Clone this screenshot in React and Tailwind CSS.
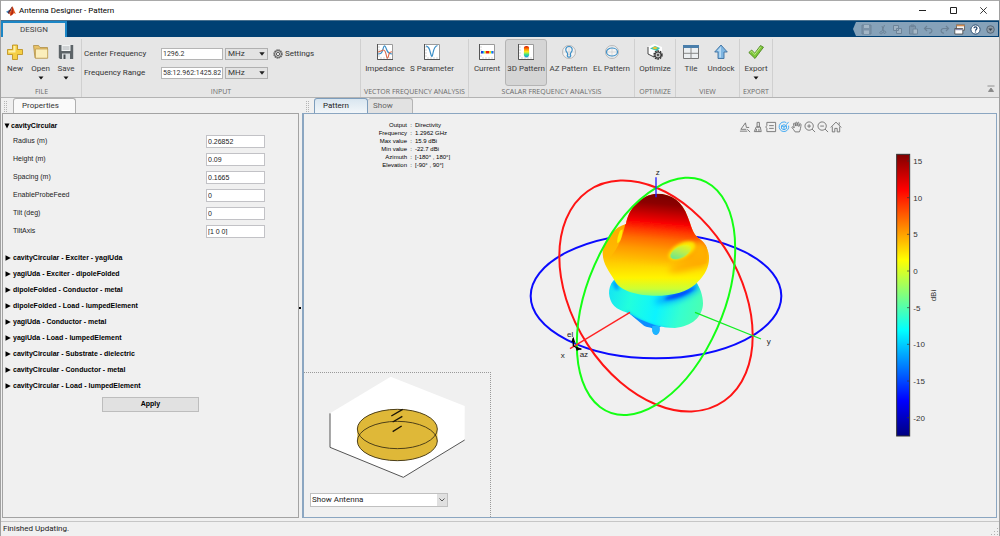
import React from "react";

const PROPERTIES = [
  { id: "radius", label: "Radius (m)", value: "0.26852" },
  { id: "height", label: "Height (m)", value: "0.09" },
  { id: "spacing", label: "Spacing (m)", value: "0.1665" },
  { id: "probe", label: "EnableProbeFeed", value: "0" },
  { id: "tilt", label: "Tilt (deg)", value: "0" },
  { id: "axis", label: "TiltAxis", value: "[1 0 0]" },
];

const SECTIONS = [
  "cavityCircular - Exciter - yagiUda",
  "yagiUda - Exciter - dipoleFolded",
  "dipoleFolded - Conductor - metal",
  "dipoleFolded - Load - lumpedElement",
  "yagiUda - Conductor - metal",
  "yagiUda - Load - lumpedElement",
  "cavityCircular - Substrate - dielectric",
  "cavityCircular - Conductor - metal",
  "cavityCircular - Load - lumpedElement",
];

const SUMMARY = [
  ["Output", "Directivity"],
  ["Frequency", "1.2962 GHz"],
  ["Max value", "15.9 dBi"],
  ["Min value", "-22.7 dBi"],
  ["Azimuth", "[-180° , 180°]"],
  ["Elevation", "[-90° , 90°]"],
];

/* ---------- ribbon icons ---------- */

const Icon = ({ children }) => (
  <svg viewBox="0 0 16 16" className="w-4 h-4 shrink-0" fill="none">
    {children}
  </svg>
);

const NewIcon = () => (
  <Icon>
    <path d="M5.500 1h5v4.500h5v5h-5v5h-5v-5h-5v-5h5z" fill="#f5cf45" stroke="#b98a17" strokeWidth="0.8" />
    <path d="M6.500 2h2v4.500h-2zM1.500 6.500h7v2h-7z" fill="#fdf0a8" />
  </Icon>
);

const OpenIcon = () => (
  <Icon>
    <path d="M.5 1.500h5l1.500 2h7.500v10.500H2z" fill="#e8c268" stroke="#a8853a" strokeWidth="0.7" />
    <path d="M2.500 5h12.200v9.200H2.500z" fill="#fbeebb" stroke="#b9964b" strokeWidth="0.7" />
  </Icon>
);

const SaveIcon = () => (
  <Icon>
    <path d="M.8 1h14.400v14H2L.8 13.800z" fill="#5d6468" />
    <path d="M3.500 1h9v6h-9z" fill="#f2f4f4" />
    <path d="M4.500 3h7M4.500 5h7" stroke="#9aa0a3" strokeWidth="0.8" />
    <path d="M4 9.500h8V15H4z" fill="#d9dddf" />
    <path d="M5.500 10.500h2V15h-2z" fill="#4b5154" />
  </Icon>
);

const Frame = () => (
  <>
    <path d="M.5.5h15v15H.5z" fill="#fff" stroke="#9b9b9b" />
    <path d="M.5 0v15.500H16" stroke="#555" />
    <path d="M1.500 3h1M1.500 6h1M1.500 9h1M1.500 12h1M4 14.500v-1M7 14.500v-1M10 14.500v-1M13 14.500v-1" stroke="#888" strokeWidth="0.7" />
  </>
);

const ImpedanceIcon = () => (
  <Icon>
    <Frame />
    <path d="M1 10c3 0 4-1 5-5s2-4 3-1 2 6 6 6" stroke="#3c8fc7" strokeWidth="1.100" />
    <path d="M1 8c3-.5 4-2 5.500-2S8.500 7 9.500 12s2 0 2.500-2 1-2 3-2.200" stroke="#d9694a" strokeWidth="1.100" />
  </Icon>
);

const SParamIcon = () => (
  <Icon>
    <Frame />
    <path d="M2 2c3 .5 3.500 3 4.500 7s1.500 5 2.500 0 2-7 4.500-7.500" stroke="#3c8fc7" strokeWidth="1.200" />
  </Icon>
);

const CurrentIcon = () => (
  <Icon>
    <Frame />
    <path d="M2 7h2v2.500H2z" fill="#1b3fe0" />
    <path d="M4 7h1.500v2.500H4zM12 7h1.500v2.500H12z" fill="#19c6e6" />
    <path d="M5.500 7H7v2.500H5.500z" fill="#f6d21b" />
    <path d="M7 7h3v2.500H7z" fill="#e3200f" />
    <path d="M10 7h2v2.500h-2z" fill="#f6d21b" />
    <path d="M13.200 7h1.300v2.500h-1.300z" fill="#1b3fe0" />
  </Icon>
);

const Pattern3DIcon = () => (
  <Icon>
    <defs>
      <linearGradient id="mini3d" x1="0" y1="0" x2="0" y2="1">
        <stop offset="0" stopColor="#d30f00" />
        <stop offset="0.25" stopColor="#ff7b00" />
        <stop offset="0.5" stopColor="#f8ee1b" />
        <stop offset="0.75" stopColor="#35e08c" />
        <stop offset="1" stopColor="#1c8ef0" />
      </linearGradient>
    </defs>
    <Frame />
    <path d="M8.500 2c2 0 3 1.200 2.500 3.200-.3 1 .3 1.500.1 3-.1 1.300.2 2-.1 3.300-.4 1.300-1.300 2-2.500 2s-2.200-.7-2.500-2c-.3-1.300 0-2-.1-3.300-.1-1.500.4-2 .1-3C5.500 3.200 6.500 2 8.500 2z" fill="url(#mini3d)" />
  </Icon>
);

const AzIcon = () => (
  <Icon>
    <circle cx="8" cy="8" r="6.500" fill="#f4f4f4" stroke="#a8a8a8" strokeWidth="0.8" />
    <path d="M8 1v14M1 8h14" stroke="#c9c9c9" strokeWidth="0.6" />
    <path d="M8 2.500c2.200 0 3.400 1.600 3.200 3.500C11 8 9.300 8.500 9.300 10.500c1 1.200.2 2.700-1.300 2.700s-2.300-1.500-1.300-2.700C6.700 8.500 5 8 4.800 6 4.600 4.100 5.800 2.500 8 2.500z" stroke="#3c8fc7" strokeWidth="1.200" />
  </Icon>
);

const ElIcon = () => (
  <Icon>
    <circle cx="8" cy="8" r="6.500" fill="#f4f4f4" stroke="#a8a8a8" strokeWidth="0.8" />
    <path d="M8 1v14M1 8h14" stroke="#c9c9c9" strokeWidth="0.6" />
    <ellipse cx="8" cy="8" rx="5.500" ry="4" stroke="#3c8fc7" strokeWidth="1.200" />
  </Icon>
);

const OptimizeIcon = () => (
  <Icon>
    <path d="M1 3l6-3 8 3v7l-6 3-8-3z" fill="#fff" />
    <path d="M1 3v7l6 3" stroke="#333" strokeWidth="0.9" />
    <path d="M3 4.500L8 2l5 2-3 3z" fill="#31c4b4" />
    <path d="M5 4l3-1.500L11 4 8 5.500z" fill="#f2c332" />
    <circle cx="11" cy="11" r="3.800" stroke="#333" strokeWidth="1.800" strokeDasharray="1.700 .7" />
    <circle cx="11" cy="11" r="3" fill="#bbb" stroke="#444" />
    <circle cx="11" cy="11" r="1" fill="#333" />
  </Icon>
);

const TileIcon = () => (
  <Icon>
    <path d="M.5 1.500h15v13H.5z" fill="#eceff1" stroke="#777" />
    <path d="M0 1h16v3H0z" fill="#4a7eab" />
    <path d="M8 4v10.500M1 9.300h14" stroke="#888" />
  </Icon>
);

const UndockIcon = () => (
  <Icon>
    <path d="M8 1l6.300 7H11v6.500H5V8H1.700z" fill="#7fb6e2" stroke="#3c6f9f" strokeWidth="0.9" />
    <path d="M8 2.500L4 7h2.300v6.500H8z" fill="#b8daf3" />
  </Icon>
);

const ExportIcon = () => (
  <Icon>
    <path d="M.8 8.500L3.700 6l3 3.300L12.500 1.500l3 1.700L7 14.500z" fill="#7cc63a" stroke="#477f1c" strokeWidth="0.8" />
    <path d="M2.200 8.400L3.700 7.200l3 3.300 6-7.700" stroke="#c5ee8f" strokeWidth="0.9" />
  </Icon>
);

const GearIcon = () => (
  <svg viewBox="0 0 12 12" className="w-[10px] h-[10px]" fill="none">
    <circle cx="6" cy="6" r="4.800" stroke="#555" strokeWidth="1.600" strokeDasharray="1.700 .8" />
    <circle cx="6" cy="6" r="4" stroke="#555" strokeWidth="1" />
    <circle cx="6" cy="6" r="2" stroke="#555" strokeWidth="1.100" />
  </svg>
);

const Caret = () => (
  <svg viewBox="0 0 6 4" className="w-[6px] h-1">
    <path d="M.5.5h5L3 3.500z" fill="#111" />
  </svg>
);

/* ---------- ribbon ---------- */

const Group = ({ title, className, children }) => (
  <section className={`flex flex-col shrink-0 border-r border-[#d0d0d0] ${className}`}>
    <div className="flex flex-1">{children}</div>
    <h2 className="font-['Open_Sans',sans-serif] text-[7px] leading-[10px] text-center text-[#6a6a6a] whitespace-nowrap">
      {title}
    </h2>
  </section>
);

const Tool = ({ icon, label, menu, active, className }) => (
  <button
    type="button"
    className={`flex flex-col items-center h-[47px] pt-1 border rounded-[3px] text-[8px] leading-[10px] text-[#3c3c3c] whitespace-nowrap ${
      active ? "bg-[#d5d5d5] border-[#b4b4b4]" : "border-transparent"
    } ${className}`}
  >
    {icon}
    <span className="mt-1 flex justify-center w-0">{label}</span>
    {menu && (
      <span className="mt-[2px]">
        <Caret />
      </span>
    )}
  </button>
);

const FrequencyRow = ({ id, label, value, align }) => (
  <div className="flex items-center h-3">
    <label htmlFor={id} className="w-[77px] text-[8px] text-[#333] whitespace-nowrap">
      {label}
    </label>
    <input
      id={id}
      defaultValue={value}
      className={`w-[62px] h-3 px-px bg-white border border-[#b5b5b5] text-[7px] text-[#333] ${align}`}
    />
    <span className="relative ml-[2px]">
      <select
        aria-label={`${label} unit`}
        className="block appearance-none w-[43px] h-3 pl-[2px] border border-[#b0b0b0] bg-[#e3e3e3] text-[8px] leading-[10px] text-[#333]"
      >
        <option>MHz</option>
      </select>
      <span className="absolute right-[3px] top-1 pointer-events-none">
        <svg viewBox="0 0 6 4" className="block w-[6px] h-1">
          <path d="M.3.3h5.400L3 3.700z" fill="#222" />
        </svg>
      </span>
    </span>
  </div>
);

const Ribbon = () => (
  <div className="flex items-stretch h-[61px] pt-[2px] bg-[#e6e6e6] border-b border-[#b3b3b3]">
    <Group title="FILE" className="w-[81px] pl-px">
      <Tool icon={<NewIcon />} label="New" className="w-[26px]" />
      <Tool icon={<OpenIcon />} label="Open" menu className="w-[25px]" />
      <Tool icon={<SaveIcon />} label="Save" menu className="w-[26px]" />
    </Group>
    <Group title="INPUT" className="w-[279px]">
      <div className="flex flex-1 pl-[2px] pt-[9px]">
        <div className="flex flex-col gap-[7px]">
          <FrequencyRow id="center" label="Center Frequency" value="1296.2" align="text-left" />
          <FrequencyRow id="range" label="Frequency Range" value="58:12.962:1425.82" align="text-right" />
        </div>
        <button type="button" className="flex items-center gap-[2px] h-3 ml-[5px] text-[8px] text-[#333]">
          <GearIcon />
          Settings
        </button>
      </div>
    </Group>
    <Group title="VECTOR FREQUENCY ANALYSIS" className="w-[108px]">
      <Tool icon={<ImpedanceIcon />} label="Impedance" className="w-[48px]" />
      <Tool icon={<SParamIcon />} label="S Parameter" className="w-[46px]" />
    </Group>
    <Group title="SCALAR FREQUENCY ANALYSIS" className="w-[166px]">
      <Tool icon={<CurrentIcon />} label="Current" className="w-[36px]" />
      <Tool icon={<Pattern3DIcon />} label="3D Pattern" active className="w-[42px]" />
      <Tool icon={<AzIcon />} label="AZ Pattern" className="w-[43px]" />
      <Tool icon={<ElIcon />} label="EL Pattern" className="w-[43px]" />
    </Group>
    <Group title="OPTIMIZE" className="w-[41px]">
      <Tool icon={<OptimizeIcon />} label="Optimize" className="w-[40px]" />
    </Group>
    <Group title="VIEW" className="w-[64px]">
      <Tool icon={<TileIcon />} label="Tile" className="w-[30px]" />
      <Tool icon={<UndockIcon />} label="Undock" className="w-[30px]" />
    </Group>
    <Group title="EXPORT" className="w-[33px]">
      <Tool icon={<ExportIcon />} label="Export" menu className="w-[32px]" />
    </Group>
    <button type="button" aria-label="Minimize ribbon" className="ml-auto mr-[4px] self-end mb-1">
      <svg viewBox="0 0 8 8" className="block w-2 h-2">
        <path d="M.5 1h7M1.500 6.500h5L4 3z" fill="#888" stroke="#888" strokeWidth="0.9" />
      </svg>
    </button>
  </div>
);

/* ---------- window chrome ---------- */

const TitleBar = () => (
  <header className="flex items-center h-5 pl-[5px] bg-white border-t border-[#a9a9a9] text-[8px] text-black">
    <svg viewBox="0 0 30 28" className="w-[10px] h-[10px] mr-[3px]">
      <path d="M0 16l10-5 4 4-6 7z" fill="#3f8fc5" />
      <path d="M10 11c4-2 6-9 9-11-1 8-5 16-11 22l-3-3z" fill="#5a2434" />
      <path d="M19 0c4 4 6 16 11 23-4-3-7-2-9 0-3 3-5 5-8 5 0-4-2-6-5-6 6-5 9-13 11-22z" fill="#e2571c" />
      <path d="M19 1c3 5 3 14 2 22-3 2-5 5-8 5 2-7 5-15 6-27z" fill="#b32a12" />
    </svg>
    <h1 className="flex-1">Antenna Designer - Pattern</h1>
    <div className="flex">
      <button type="button" aria-label="Minimize" className="w-[31px] flex justify-center">
        <svg viewBox="0 0 7 7" className="w-[7px] h-[7px]" stroke="#222" fill="none">
          <path d="M0 3.500h7" />
        </svg>
      </button>
      <button type="button" aria-label="Maximize" className="w-[30px] flex justify-center">
        <svg viewBox="0 0 7 7" className="w-[7px] h-[7px]" stroke="#222" fill="none">
          <path d="M.5.5h6v6h-6z" />
        </svg>
      </button>
      <button type="button" aria-label="Close" className="w-[31px] flex justify-center">
        <svg viewBox="0 0 7 7" className="w-[7px] h-[7px]" stroke="#222" strokeWidth="0.9" fill="none">
          <path d="M.3.3l6.400 6.400M6.700.3L.3 6.700" />
        </svg>
      </button>
    </div>
  </header>
);

const QUICK_ACTIONS = [
  {
    name: "Save",
    art: (
      <>
        <path d="M1 1h9v9H1z" stroke="#6d8499" fill="#7c93a8" />
        <path d="M3 1h5v3H3zM3 6.500h5V10H3z" fill="#a3b6c6" />
      </>
    ),
  },
  {
    name: "Cut",
    art: <path d="M7.500 1L5 7M5 2l1.500 5M4 7.500a1.200 1.200 0 1 0 .1 0M7.500 7a1.200 1.200 0 1 0 .1 0" stroke="#6b8296" />,
  },
  {
    name: "Copy",
    art: <path d="M1.500 1.500h5v5h-5zM4.500 4.500h5v5h-5z" stroke="#6d8499" fill="#9fb2c2" />,
  },
  {
    name: "Paste",
    art: (
      <>
        <path d="M1.500 2h6v8h-6zM3 1h3v1.500H3z" stroke="#6d8499" fill="#8198ac" />
        <path d="M5 5h4.500v5H5z" stroke="#71889c" fill="#a6b8c7" />
      </>
    ),
  },
  { name: "Undo", art: <path d="M4 2L1.500 4.500 4 7M2 4.500h4.500c3.500 0 3 5-.5 4.500" stroke="#6b8296" strokeWidth="1.200" /> },
  { name: "Redo", art: <path d="M7 2l2.500 2.500L7 7M9 4.500H4.500C1 4.500 1.500 9.500 5 9" stroke="#6b8296" strokeWidth="1.200" /> },
  {
    name: "Switch windows",
    art: (
      <>
        <path d="M2.500.8h8v5.500h-8z" fill="#f6f6f6" stroke="#555" strokeWidth="0.8" />
        <path d="M2.500.8h8v1.500h-8z" fill="#d28a4c" />
        <path d="M.8 4.500h8V10h-8z" fill="#fff" stroke="#444" strokeWidth="0.8" />
        <path d="M1 5h7.500v1.200H1z" fill="#88a" />
      </>
    ),
  },
  {
    name: "Help",
    art: (
      <>
        <circle cx="5.500" cy="5.500" r="4.600" fill="#fff" stroke="#2d4f73" />
        <path d="M4 4.300c0-2 3-2 3 0 0 1.200-1.500 1.200-1.500 2.400M5.500 7.500v1" stroke="#1d4168" strokeWidth="1.200" />
      </>
    ),
  },
  {
    name: "More",
    art: (
      <>
        <circle cx="5.500" cy="5.500" r="3.800" fill="#8c9aa6" stroke="#4f6172" strokeWidth="0.9" />
        <path d="M3.500 4.500h4l-2 2.500z" fill="#33414d" />
      </>
    ),
  },
];

const TabBar = () => (
  <nav className="flex items-stretch justify-between h-[17px] pr-px bg-[#004073] border-t border-[#48708f]">
    <button
      type="button"
      className="w-[66px] bg-[#e6e6e6] border-2 border-b-0 border-[#1b86c6] text-[8px] leading-[14px] text-[#444]"
    >
      DESIGN
    </button>
    <div className="flex items-center">
      <svg viewBox="0 0 5 14" className="w-[5px] h-[14px]">
        <path d="M5 0H3L0 7l3 7h2z" fill="#86a2b9" />
      </svg>
      <div className="flex items-center justify-between w-[140px] h-[14px] pl-[3px] pr-px bg-[#86a2b9]">
        {QUICK_ACTIONS.map((action) => (
          <button key={action.name} type="button" aria-label={action.name} className="w-3">
            <svg viewBox="0 0 11 11" className="block w-[11px] h-[11px]" fill="none">
              {action.art}
            </svg>
          </button>
        ))}
      </div>
    </div>
  </nav>
);

const Grip = () => (
  <span className="w-[3px] h-[11px] mt-[3px] border-x border-dotted border-[#b5b5b5]" />
);

/* ---------- properties ---------- */

const PropertiesPanel = () => (
  <aside className="flex flex-col w-[298px] shrink-0 pl-px">
    <div className="flex h-[15px] pl-[2px] gap-[6px]">
      <Grip />
      <h2 className="w-[63px] bg-[#fafafa] border border-b-0 border-[#b0b0b0] rounded-t-[3px] pl-2 text-[8px] leading-[14px] text-[#333]">
        Properties
      </h2>
    </div>
    <div className="flex-1 border border-[#a3a3a3] bg-[#f0f0f0] font-['Liberation_Sans',Arial,sans-serif] text-[7px] text-[#222]">
      <button type="button" className="flex items-center gap-px h-3 mt-[6px] pl-px font-bold text-black">
        <svg viewBox="0 0 6 6" className="w-[6px] h-[6px]">
          <path d="M.5.5h5L3 5.500z" />
        </svg>
        cavityCircular
      </button>
      <div className="flex flex-col mt-[3px] gap-[5px]">
        {PROPERTIES.map((prop) => (
          <div key={prop.id} className="flex items-start h-[13px] pl-[10px] pr-[33px]">
            <label htmlFor={prop.id} className="flex-1 leading-[11px]">
              {prop.label}
            </label>
            <input
              id={prop.id}
              defaultValue={prop.value}
              className="w-[59px] h-[13px] px-px bg-white border border-[#c2c2c6]"
            />
          </div>
        ))}
      </div>
      <ul className="mt-3">
        {SECTIONS.map((name) => (
          <li key={name}>
            <button type="button" className="flex items-center gap-[2px] h-4 pl-[2px] font-bold text-black">
              <svg viewBox="0 0 6 6" className="w-[6px] h-[6px]">
                <path d="M.5.3v5.400L5.800 3z" />
              </svg>
              {name}
            </button>
          </li>
        ))}
      </ul>
      <button
        type="button"
        className="block w-[97px] h-[15px] mt-[3px] ml-[99px] bg-[#e1e1e1] border border-[#bdbdbd] font-bold text-black"
      >
        Apply
      </button>
    </div>
  </aside>
);

/* ---------- plot area ---------- */

const AXES_TOOLS = [
  { name: "Export", art: <path d="M1 11h8M2 9l5-7 1 5h3M9 9l3 3M2 9h6" /> },
  { name: "Brush", art: <path d="M5.500 1.500h2.500v5H5.500zM4.500 6.500h4.500l1 5H2.500zM5 8.500l-.7 3M7.500 8.500v3" /> },
  { name: "Data tips", art: <path d="M2 1.500h9.500v10H2V8L.8 6.500 2 5zM4.500 5h5M4.500 8h5" /> },
  {
    name: "Rotate",
    active: true,
    art: <path d="M9 1.700A5.200 5.200 0 1 0 11.500 5M9 4l2.500-3M3.800 5.200l2.700-1.200 2.700 1.200v3L6.500 9.500 3.800 8.200zM3.800 5.200l2.700 1.200 2.700-1.200M6.500 6.400v3" />,
  },
  {
    name: "Pan",
    art: <path d="M4.500 11.800C3.500 10 2 8.500 1 7c0-1.200 1.300-1 2.500.5L2.700 3c.2-1 1.200-1 1.500 0L5 5.500V2c.2-1 1.300-1 1.500 0v3.500L7.300 2c.4-1 1.400-.7 1.400.3L8.500 6l1-2.500c.5-.8 1.500-.4 1.400.5-.3 2.500-.6 5.500-1.900 7.800z" />,
  },
  { name: "Zoom in", art: <path d="M5.500 1a4.500 4.500 0 1 0 .1 0zM8.700 8.700L12 12M3.500 5.500h4M5.500 3.500v4" /> },
  { name: "Zoom out", art: <path d="M5.500 1a4.500 4.500 0 1 0 .1 0zM8.700 8.700L12 12M3.500 5.500h4" /> },
  { name: "Restore view", art: <path d="M.8 7L6.500 1.200 12.200 7M2.500 6v5.800h2.700V8h2.600v3.800h2.700V6M10 4V1.500" /> },
];

const AxesToolbar = () => (
  <div className="flex justify-end pt-[7px] pr-[153px]">
    {AXES_TOOLS.map((tool) => (
      <button key={tool.name} type="button" aria-label={tool.name} className="w-[13px]">
        <svg
          viewBox="0 0 13 13"
          className="block w-3 h-3"
          fill="none"
          stroke={tool.active ? "#3aa6f2" : "#747474"}
          strokeWidth="1"
        >
          {tool.art}
        </svg>
      </button>
    ))}
  </div>
);

const UPPER_LOBE =
  "M318 192 C285 200 255 235 248 275 C247 310 266 332 283 360 C300 398 370 410 425 407 C480 404 515 386 533 366 C556 344 567 320 567 295 C566 262 552 246 535 235 C515 215 514 196 503 170 C487 124 455 101 411 101 C362 104 325 146 318 192Z";
const LOWER_LOBE =
  "M287 355 C264 375 262 405 276 430 C292 455 325 455 345 470 C385 490 425 504 465 504 C515 500 549 470 549 430 C549 405 540 385 530 368Z";

const RadiationPattern = () => (
  <svg viewBox="0 0 810 810" className="block w-[270px] h-[270px]" fill="none">
    <defs>
      <linearGradient id="torus" x1="0" y1="190" x2="0" y2="408" gradientUnits="userSpaceOnUse">
        <stop offset="0" stopColor="#ffa800" />
        <stop offset="0.45" stopColor="#ffbc00" />
        <stop offset="0.6" stopColor="#ffd800" />
        <stop offset="0.75" stopColor="#fff400" />
        <stop offset="0.9" stopColor="#ccff34" />
        <stop offset="1" stopColor="#80ff80" />
      </linearGradient>
      <linearGradient id="mainlobe" x1="418" y1="100" x2="398" y2="320" gradientUnits="userSpaceOnUse">
        <stop offset="0" stopColor="#780000" />
        <stop offset="0.14" stopColor="#8c0000" />
        <stop offset="0.28" stopColor="#c80000" />
        <stop offset="0.4" stopColor="#fa0400" />
        <stop offset="0.5" stopColor="#ff3600" />
        <stop offset="0.62" stopColor="#ff6c00" />
        <stop offset="0.76" stopColor="#ff9800" />
        <stop offset="0.9" stopColor="#ffb800" />
        <stop offset="1" stopColor="#ffc800" stopOpacity="0" />
      </linearGradient>
      <linearGradient id="backlobe" x1="268" y1="380" x2="540" y2="450" gradientUnits="userSpaceOnUse">
        <stop offset="0" stopColor="#14e4f4" />
        <stop offset="0.25" stopColor="#22ffdc" />
        <stop offset="0.55" stopColor="#0cf4ff" />
        <stop offset="0.8" stopColor="#35ffd0" />
        <stop offset="1" stopColor="#48ffb4" />
      </linearGradient>
      <linearGradient id="crater" x1="505" y1="258" x2="460" y2="300" gradientUnits="userSpaceOnUse">
        <stop offset="0" stopColor="#f4f410" />
        <stop offset="0.45" stopColor="#b8ee50" />
        <stop offset="1" stopColor="#58e4a0" />
      </linearGradient>
      <filter id="soft2">
        <feGaussianBlur stdDeviation="2" />
      </filter>
      <filter id="soft4" x="-30%" y="-30%" width="160%" height="160%">
        <feGaussianBlur stdDeviation="4" />
      </filter>
      <filter id="soft9" x="-50%" y="-100%" width="200%" height="300%">
        <feGaussianBlur stdDeviation="10" />
      </filter>
      <clipPath id="upper">
        <path d={UPPER_LOBE} />
      </clipPath>
      <clipPath id="lower">
        <path d={LOWER_LOBE} />
      </clipPath>
    </defs>

    {/* xy circle sits behind the surface */}
    <ellipse cx="408" cy="408" rx="376" ry="187" stroke="#0a0aff" strokeWidth="6" />

    <path d="M318 452 L372 497 C380 503 392 500 398 506 C396 520 404 525 410 524 C418 522 420 512 418 502 L440 490 L400 460Z" fill="#0c8cff" />
    <path d="M397 498 C394 520 402 525 409 524 C418 522 420 512 418 496Z" fill="#1cb4ff" />
    <path d={LOWER_LOBE} fill="url(#backlobe)" />
    <g clipPath="url(#lower)">
      <path d="M400 428 C440 436 500 420 540 385 L525 355 L440 395Z" fill="#00a8ff" filter="url(#soft9)" />
      <path d="M432 419 C470 420 510 402 530 380 C500 390 450 398 432 419Z" fill="#0050ff" filter="url(#soft4)" />
      <path d="M276 365 L292 362 L298 390 L284 388Z" fill="#00a4ff" filter="url(#soft4)" />
      <path d="M320 452 C360 485 400 498 450 506 L400 520 L320 480Z" fill="#00b4ff" filter="url(#soft4)" />
    </g>

    <path d={UPPER_LOBE} fill="url(#torus)" />
    <g clipPath="url(#upper)">
      <path
        d="M317 185 C320 100 370 80 411 80 C460 80 500 110 520 175 C522 205 530 225 560 245 L560 310 C500 330 330 330 262 300 C296 268 310 225 317 185Z"
        fill="url(#mainlobe)"
        filter="url(#soft2)"
      />
      <path d="M300 212 C294 226 290 240 292 250 C302 246 306 230 308 208Z" fill="#ffee00" filter="url(#soft2)" />
      <ellipse cx="540" cy="282" rx="28" ry="36" fill="#ffb000" filter="url(#soft9)" />
      <ellipse cx="500" cy="318" rx="56" ry="12" transform="rotate(-14 500 318)" fill="#ffaa00" filter="url(#soft9)" />
      <ellipse cx="486" cy="272" rx="44" ry="22" transform="rotate(-28 486 272)" fill="#fde800" filter="url(#soft4)" />
      <ellipse cx="482" cy="276" rx="34" ry="17" transform="rotate(-28 482 276)" fill="url(#crater)" filter="url(#soft2)" />
    </g>

    {/* circle stroke keeps its width while the matrix projects it onto each plane */}
    <circle r="300" transform="matrix(.967 .397 0 -1.085 408 408)" stroke="#ff1414" vectorEffect="non-scaling-stroke" className="[stroke-width:2px]" />
    <circle r="300" transform="matrix(-.792 .48 0 -1.085 408 409)" stroke="#14ff14" vectorEffect="non-scaling-stroke" className="[stroke-width:2px]" />

    <g strokeWidth="4">
      <path d="M408 52V112" stroke="#2020ff" />
      <path d="M330 457L150 566" stroke="#f22" />
      <path d="M525 457L723 537" stroke="#1e2" />
    </g>
    <path d="M160 558V535M160 558L184 568" stroke="#000" strokeWidth="4" />
    <path d="M154 545L160 530L166 548ZM166 561L186 567L170 572Z" fill="#000" />
    <g fill="#222" fontSize="24" fontFamily="Liberation Sans, Arial, sans-serif">
      <text x="407" y="46">z</text>
      <text x="740" y="553">y</text>
      <text x="122" y="594">x</text>
      <text x="141" y="531">el</text>
      <text x="179" y="590">az</text>
    </g>
  </svg>
);

const ColorBar = () => (
  <svg viewBox="69 30 132 870" className="block w-[44px] h-[290px] shrink-0">
    <defs>
      <linearGradient id="jet" x1="0" y1="0" x2="0" y2="1">
        <stop offset="0" stopColor="#800000" />
        <stop offset="0.125" stopColor="#ff0000" />
        <stop offset="0.375" stopColor="#ffff00" />
        <stop offset="0.625" stopColor="#00ffff" />
        <stop offset="0.875" stopColor="#0000ff" />
        <stop offset="1" stopColor="#000080" />
      </linearGradient>
    </defs>
    <rect x="80" y="43" width="39" height="845" fill="url(#jet)" stroke="#333" strokeWidth="3" />
    {[15, 10, 5, 0, -5, -10, -15, -20].map((tick, i) => (
      <g key={tick}>
        <path d={`M111 ${63 + i * 110}h8`} stroke="#333" strokeWidth="2" />
        <text x="130" y={72 + i * 110} fontSize="24" fill="#333" fontFamily="Liberation Sans, Arial, sans-serif">
          {tick}
        </text>
      </g>
    ))}
    <text transform="translate(199 484) rotate(-90)" fontSize="24" fill="#333" fontFamily="Liberation Sans, Arial, sans-serif">
      dBi
    </text>
  </svg>
);

const AntennaPreview = () => (
  <div className="flex flex-col h-[145px] border-t border-r border-dotted border-[#999]">
    <svg viewBox="84 30 414 312" className="block w-[138px] h-[104px] mt-[2px] ml-[24px]" fill="none">
      <path d="M90 145L272 35L494 123V225L310 337L90 247Z" fill="#fff" />
      <path d="M90 145V247L310 337L494 225" stroke="#555" strokeWidth="3" />
      <path d="M172 192A120 59 0 0 1 412 192V228A120 59 0 0 1 172 228Z" fill="#dfb838" />
      <g stroke="#4d3f18" strokeWidth="3">
        <ellipse cx="292" cy="192" rx="120" ry="59" />
        <ellipse cx="292" cy="228" rx="120" ry="59" />
      </g>
      <path d="M274 153L308 133M278 171L307 154M278 200L305 183" stroke="#1a1408" strokeWidth="4" />
    </svg>
    <span className="relative ml-[6px] mt-[14px] w-[138px]">
      <select
        aria-label="Preview"
        className="block appearance-none w-full h-[14px] pl-px bg-white border border-[#c0c0c0] text-[8px] leading-[12px] text-[#222]"
      >
        <option>Show Antenna</option>
      </select>
      <span className="absolute right-px top-px w-[10px] h-3 bg-[#e0e0e0] flex items-center justify-center pointer-events-none">
        <svg viewBox="0 0 6 4" className="w-[6px] h-1" fill="none" stroke="#555">
          <path d="M.5.5L3 3L5.500.5" />
        </svg>
      </span>
    </span>
  </div>
);

const PlotPanel = () => (
  <main className="flex flex-col flex-1 pr-[2px]">
    <div className="flex h-[15px] pl-[4px] gap-[5px]">
      <Grip />
      <div className="flex" role="tablist">
        <button
          type="button"
          role="tab"
          aria-selected="true"
          className="w-[54px] pl-2 text-left border border-b-0 border-[#7d9dbc] rounded-t-[3px] bg-gradient-to-b from-[#d9e6f0] to-[#f2f6f9] text-[8px] leading-[14px] text-[#222]"
        >
          Pattern
        </button>
        <button
          type="button"
          role="tab"
          aria-selected="false"
          className="w-[45px] pl-[5px] text-left border border-l-0 border-b-0 border-[#b4b4b4] rounded-t-[3px] bg-[#e2e2e2] text-[8px] leading-[14px] text-[#666]"
        >
          Show
        </button>
      </div>
    </div>
    <div className="flex flex-1 border border-l-2 border-[#8ba6c1] bg-[#f0f0f0]">
      <div className="flex flex-col justify-between w-[187px] shrink-0">
        <table className="ml-[71px] mt-[7px] font-['Liberation_Sans',Arial,sans-serif] text-[6px] leading-[8px] text-black">
          <tbody>
            {SUMMARY.map(([key, value]) => (
              <tr key={key}>
                <th scope="row" className="w-8 p-0 font-normal text-right whitespace-nowrap">
                  {key}
                </th>
                <td className="w-2 p-0 text-center">:</td>
                <td className="p-0 whitespace-nowrap">{value}</td>
              </tr>
            ))}
          </tbody>
        </table>
        <AntennaPreview />
      </div>
      <div className="flex flex-col flex-1">
        <AxesToolbar />
        <div className="flex items-start mt-[17px] pr-[59px]">
          <div className="flex flex-1 justify-center pt-[10px] pr-[74px]">
            <RadiationPattern />
          </div>
          <ColorBar />
        </div>
      </div>
    </div>
  </main>
);

export default function App() {
  return (
    <div className="flex flex-col min-h-screen bg-[#f0f0f0] border-x border-[#a0a0a0] font-['Roboto','Open_Sans',sans-serif]">
      <TitleBar />
      <TabBar />
      <Ribbon />
      <div className="flex flex-1">
        <PropertiesPanel />
        <div className="w-[3px] flex items-center">
          <span className="w-[2px] h-[2px] bg-black" />
        </div>
        <PlotPanel />
      </div>
      <footer className="flex items-center justify-between h-[15px] mt-[3px] pl-[2px] border-t border-[#c6c6c6] text-[8px] text-[#222]">
        <span>Finished Updating.</span>
        <svg viewBox="0 0 8 8" className="self-end w-2 h-2" fill="#b0b0b0">
          <path d="M6 0h1v1H6zM6 3h1v1H6zM6 6h1v1H6zM3 3h1v1H3zM3 6h1v1H3zM0 6h1v1H0z" />
        </svg>
      </footer>
    </div>
  );
}
